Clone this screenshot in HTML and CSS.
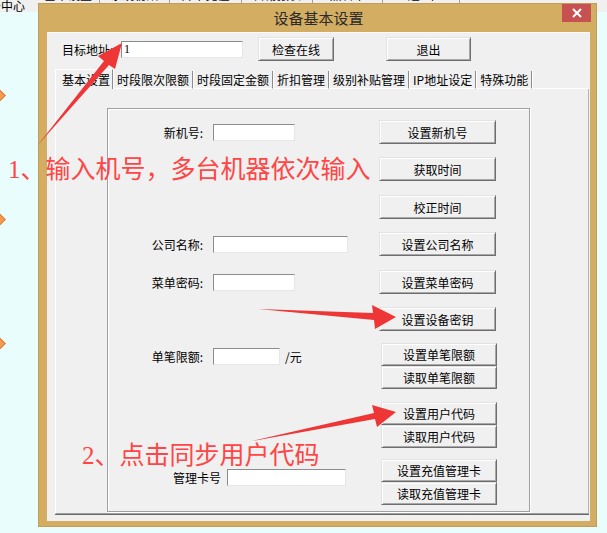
FILE: index.html
```html
<!DOCTYPE html>
<html lang="zh-CN">
<head>
	<meta charset="UTF-8">
	<title>设备基本设置</title>
	<link rel="stylesheet" href="styles.css">
</head>
<body>

	<!-- 后面的主程序 -->
	<div class="topbar">
		<span class="app-name">务中心</span>
		<div class="menu">
			<span class="m1">基本设置</span>
			<span class="m2">系统初始</span>
			<span class="m3">开卡充值</span>
			<span class="m4">日常报表</span>
			<span class="m5">黑名单</span>
			<span class="m6">退 出</span>
		</div>
	</div>
	<div class="side">
		<i class="dot"></i>
		<i class="dot"></i>
		<i class="dot"></i>
	</div>

	<!-- 设备基本设置 窗口 -->
	<div class="dialog">
		<div class="title">
			设备基本设置
			<span class="close">
				<svg width="10" height="10" viewBox="0 0 10 10"><path d="M1 1L9 9M9 1L1 9" stroke="#fff" stroke-width="2"/></svg>
			</span>
		</div>
		<div class="client">
			<div class="toolbar">
				<label class="addr-label">目标地址:</label>
				<input class="edit addr" value="1">
				<button class="btn btn-check">检查在线</button>
				<button class="btn btn-exit">退出</button>
			</div>

			<div class="tabs">
				<div class="tabbar">
					<span class="tab active">基本设置</span>
					<span class="tab">时段限次限额</span>
					<span class="tab">时段固定金额</span>
					<span class="tab">折扣管理</span>
					<span class="tab">级别补贴管理</span>
					<span class="tab">IP地址设定</span>
					<span class="tab">特殊功能</span>
					<span class="tab-fill"></span>
				</div>
				<div class="tabpage">
					<div class="panel">
						<div class="row">
							<div class="field"><label class="label">新机号:</label><input class="edit w82"></div>
							<button class="btn">设置新机号</button>
						</div>
						<div class="row">
							<div class="field"></div>
							<button class="btn">获取时间</button>
						</div>
						<div class="row down">
							<div class="field"></div>
							<button class="btn">校正时间</button>
						</div>
						<div class="row">
							<div class="field"><label class="label">公司名称:</label><input class="edit w135"></div>
							<button class="btn">设置公司名称</button>
						</div>
						<div class="row down">
							<div class="field"><label class="label">菜单密码:</label><input class="edit w82"></div>
							<button class="btn">设置菜单密码</button>
						</div>
						<div class="row">
							<div class="field"></div>
							<button class="btn">设置设备密钥</button>
						</div>
						<div class="row top up1">
							<div class="field pad5"><label class="label">单笔限额:</label><input class="edit w67"><span class="unit">/元</span></div>
							<div class="pair">
								<button class="btn">设置单笔限额</button>
								<button class="btn">读取单笔限额</button>
							</div>
						</div>
						<div class="row top">
							<div class="field"></div>
							<div class="pair">
								<button class="btn">设置用户代码</button>
								<button class="btn">读取用户代码</button>
							</div>
						</div>
						<div class="row top up2">
							<div class="field pad10"><label class="label card-label">管理卡号</label><input class="edit w119"></div>
							<div class="pair">
								<button class="btn">设置充值管理卡</button>
								<button class="btn">读取充值管理卡</button>
							</div>
						</div>
					</div>
				</div>
			</div>
		</div>
	</div>

	<!-- 红色标注 -->
	<div class="note note1">1、输入机号，多台机器依次输入</div>
	<div class="note note2">2、点击同步用户代码</div>
	<svg class="arrows" width="607" height="533" viewBox="0 0 607 533">
		<polygon points="37,146 104,61 98,56 122,43 115,69 109,65"/>
		<polygon points="258,309 373,313 372,305 396,317 375,329 374,320"/>
		<polygon points="252,441 374,413 372,405 396,412 377,427 375,419"/>
	</svg>

</body>
</html>
```

FILE: styles.css
```css
*{
	margin: 0;
	padding: 0;
	box-sizing: border-box;
}
body{
	width: 607px;
	height: 533px;
	overflow: hidden;
	position: relative;
	background-color: #eafdfd;
	font: 12px "Noto Sans CJK SC", sans-serif;
	color: #000;
}

/*后面的主程序*/
.topbar{
	display: flex;
	height: 12px;
	background-color: #f0f0f0;
	overflow: hidden;
}
.app-name{
	width: 48px;
	margin-left: -11px;
	line-height: 12px;
	white-space: nowrap;
}
.menu{
	display: flex;
	height: 23px;
	margin-top: -11px;
}
.menu span{
	line-height: 12px;
	text-align: center;
	border-right: 1px solid #a0a0a0;
}
.m1{ width: 63px; }
.m2{ width: 70px; }
.m3{ width: 72px; }
.m4{ width: 71px; }
.m5{ width: 70px; }
.m6{ width: 77px; }

.side{
	display: flex;
	flex-direction: column;
	gap: 115px;
	padding-top: 79px;
}
.dot{
	display: block;
	width: 9px;
	height: 9px;
	margin-left: -5px;
	background-color: #f59a4e;
	border: 1px solid #e07b34;
	transform: rotate(45deg);
}

/*窗口*/
.dialog{
	position: absolute;
	left: 38px;
	top: 3px;
	width: 559px;
	height: 524px;
	background-color: #d3ad62;
	border: 1px solid #c29d55;
	padding: 0 6px 5px 8px;
	display: flex;
	flex-direction: column;
}
.title{
	position: relative;
	height: 28px;
	line-height: 28px;
	text-align: center;
	font-size: 15px;
	color: #2a2a2a;
}
.close{
	position: absolute;
	right: -1px;
	top: 0;
	width: 29px;
	height: 18px;
	background-color: #c75050;
	display: flex;
	align-items: center;
	justify-content: center;
}
.client{
	flex: 1;
	background-color: #f0f0f0;
	border-top: 1px solid #fafafa;
}

/*目标地址一行*/
.toolbar{
	display: flex;
	align-items: center;
	height: 28px;
	padding: 4px 0 0 15px;
}
.addr-label{
	width: 59px;
}
.edit{
	height: 17px;
	background-color: #fff;
	border: 1px solid;
	border-color: #8c8c8c #e6e6e6 #e6e6e6 #8c8c8c;
	font: 12px "Liberation Serif", "Noto Sans CJK SC", serif;
	padding: 0 2px;
	outline: none;
}
.addr{ width: 122px; }
.btn{
	width: 117px;
	height: 24px;
	background-color: #f0f0f0;
	border: 1px solid;
	border-color: #e3e3e3 #6e6e6e #6e6e6e #e3e3e3;
	box-shadow: inset 1px 1px #fff, inset -1px -1px #a8a8a8;
	font: 12px "Noto Sans CJK SC", sans-serif;
	color: #000;
}
.btn-check{
	width: 76px;
	margin-left: 15px;
}
.btn-exit{
	width: 85px;
	margin-left: 52px;
}

/*选项卡*/
.tabs{
	margin: 8px 1px 0 8px;
}
.tabbar{
	display: flex;
	align-items: flex-end;
	height: 20px;
}
.tab{
	height: 18px;
	line-height: 17px;
	padding: 0 3px 0 4px;
	border-right: 1px solid #8c8c8c;
	border-bottom: 1px solid #fff;
	box-shadow: 1px 0 #fff;
	white-space: nowrap;
}
.tab.active{
	height: 20px;
	line-height: 19px;
	padding: 0 2px 0 6px;
	border-top: 1px solid #fff;
	border-left: 1px solid #fff;
	border-bottom: none;
}
.tab-fill{
	flex: 1;
	border-bottom: 1px solid #fff;
}
.tabpage{
	height: 425px;
	border-left: 1px solid #fff;
	border-right: 1px solid #b4b4b4;
	border-bottom: 1px solid #a0a0a0;
	box-shadow: 0 1px #696969;
	padding: 19px 0 0 51px;
}

/*设置区*/
.panel{
	width: 423px;
	height: 404px;
	border: 1px solid #a0a0a0;
	box-shadow: inset 1px 1px #fff, 1px 1px #fff;
	display: flex;
	flex-direction: column;
	gap: 13px;
	padding-top: 11px;
}
.row{
	display: flex;
	align-items: center;
}
.row.top{ align-items: flex-start; }
.row.down{ margin-top: 1px; }
.row.up1{ margin-top: -1px; }
.row.up2{ margin-top: -2px; }
.field{
	width: 271px;
	display: flex;
	align-items: center;
}
.pad5{ padding-top: 5px; }
.pad10{ padding-top: 10px; }
.label{
	width: 95px;
	text-align: right;
	margin-right: 10px;
}
.card-label{
	width: 113px;
	margin-right: 6px;
}
.w67{ width: 67px; }
.w82{ width: 82px; }
.w119{ width: 119px; }
.w135{ width: 135px; }
.unit{
	margin-left: 5px;
}
.pair{
	display: flex;
	flex-direction: column;
	margin-left: 2px;
}
.pair .btn{
	width: 116px;
	height: 23px;
}

/*红色标注*/
.note{
	position: absolute;
	font: 25px/1 "Liberation Serif", "Noto Sans CJK SC", serif;
	color: #ff4545;
	white-space: nowrap;
}
.note1{
	left: 8px;
	top: 157px;
}
.note2{
	left: 82px;
	top: 443px;
}
.arrows{
	position: absolute;
	left: 0;
	top: 0;
	fill: #ee3636;
	pointer-events: none;
}
```
